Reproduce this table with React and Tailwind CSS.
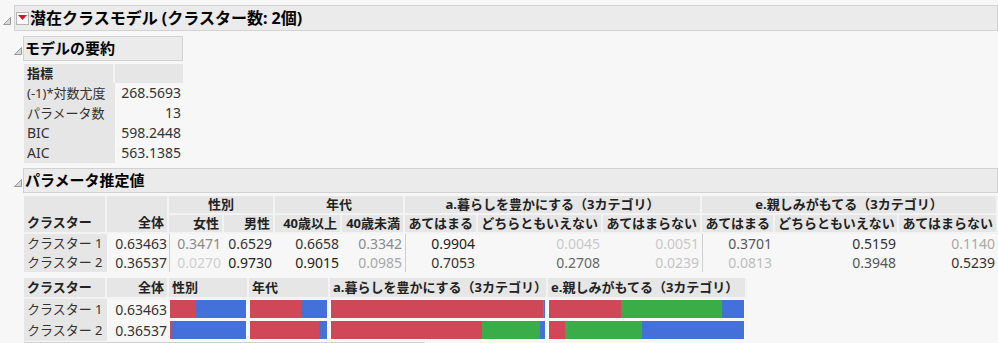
import React from "react";

const RED = "#d04858";
const GREEN = "#3aac48";
const BLUE = "#4470da";

const summary = [
  ["(-1)*対数尤度", "268.5693"],
  ["パラメータ数", "13"],
  ["BIC", "598.2448"],
  ["AIC", "563.1385"],
];

// value + text colour (JMP fades small probabilities)
const estimates = [
  {
    name: "クラスター 1",
    all: "0.63463",
    cells: [
      ["0.3471", "#8a8a8a"],
      ["0.6529", "#333"],
      ["0.6658", "#333"],
      ["0.3342", "#8a8a8a"],
      ["0.9904", "#222"],
      ["0.0045", "#c9c9c9"],
      ["0.0051", "#c9c9c9"],
      ["0.3701", "#555"],
      ["0.5159", "#333"],
      ["0.1140", "#a8a8a8"],
    ],
  },
  {
    name: "クラスター 2",
    all: "0.36537",
    cells: [
      ["0.0270", "#cfcfcf"],
      ["0.9730", "#222"],
      ["0.9015", "#222"],
      ["0.0985", "#a8a8a8"],
      ["0.7053", "#333"],
      ["0.2708", "#666"],
      ["0.0239", "#c4c4c4"],
      ["0.0813", "#bdbdbd"],
      ["0.3948", "#555"],
      ["0.5239", "#333"],
    ],
  },
];

const bars = [
  {
    name: "クラスター 1",
    all: "0.63463",
    groups: [
      [0.3471, 0, 0.6529],
      [0.6658, 0, 0.3342],
      [0.9904, 0.0045, 0.0051],
      [0.3701, 0.5159, 0.114],
    ],
  },
  {
    name: "クラスター 2",
    all: "0.36537",
    groups: [
      [0.027, 0, 0.973],
      [0.9015, 0, 0.0985],
      [0.7053, 0.2708, 0.0239],
      [0.0813, 0.3948, 0.5239],
    ],
  },
];

// columns that start a new group get a separator line in the data rows
const groupStart = [0, 4, 7];

function Disclose() {
  return (
    <svg width="8" height="8" viewBox="0 0 8 8" className="shrink-0">
      <polygon points="0.5,7.5 7.5,7.5 7.5,0.5" fill="#d8d8d8" stroke="#9a9a9a" strokeWidth="1" />
    </svg>
  );
}

function RedMenu() {
  return (
    <div className="w-[13px] h-[13px] border border-[#b5b5b5] bg-[#fafafa] flex items-center justify-center shrink-0">
      <svg width="9" height="6" viewBox="0 0 9 6">
        <polygon points="0,0 9,0 4.5,5" fill="#d5142a" />
      </svg>
    </div>
  );
}

function SectionHead({ title, className }) {
  return (
    <div className="flex items-center">
      <div className="w-[23px] flex justify-end pr-[1px] pt-[5px]">
        <Disclose />
      </div>
      <div
        className={
          "h-[25px] border border-[#d2d2d2] bg-[#ebebeb] flex items-center pl-[1px] text-[15px] font-bold text-black leading-none " +
          className
        }
      >
        {title}
      </div>
    </div>
  );
}

function Bar({ parts }) {
  const colors = [RED, GREEN, BLUE];
  return (
    <div className="flex h-full w-full border border-white/40">
      {parts.map((p, i) =>
        p > 0 ? <div key={i} style={{ width: `${p * 100}%`, backgroundColor: colors[i] }} /> : null
      )}
    </div>
  );
}

export default function App() {
  const hd = "bg-[#e6e6e6] border-r-2 border-b-2 border-[#f3f3f3] font-bold px-[3px] h-[19px] leading-[17px] whitespace-nowrap";

  return (
    <div
      className="w-[998px] h-[343px] overflow-hidden bg-[#f7f7f7] text-[13px] text-[#222]"
      style={{ fontFamily: '"Noto Sans", "Noto Sans CJK JP", sans-serif' }}
    >
      {/* report title */}
      <div className="flex items-center pt-[5px]">
        <div className="w-[14px] flex justify-center pt-[5px]">
          <Disclose />
        </div>
        <div className="flex-1 h-[26px] border border-[#d2d2d2] bg-[#ebebeb] flex items-center gap-[1px] pl-[1px]">
          <RedMenu />
          <span className="text-[16px] font-bold text-black leading-none">潜在クラスモデル (クラスター数: 2個)</span>
        </div>
      </div>

      {/* model summary */}
      <div className="mt-[5px]">
        <SectionHead title="モデルの要約" className="w-[160px]" />
        <div className="ml-[24px] mt-[3px] w-[159px]">
          <div className="flex h-[19px] leading-[19px] font-bold">
            <div className="w-[91px] bg-[#e6e6e6] border-r-2 border-[#f3f3f3] px-[3px]">指標</div>
            <div className="flex-1 bg-[#e6e6e6]" />
          </div>
          {summary.map(([k, v]) => (
            <div key={k} className="flex h-[20px] leading-[20px]">
              <div className="w-[91px] bg-[#e6e6e6] px-[3px] whitespace-nowrap text-[#333]">
                {k === "BIC" || k === "AIC" ? <span className="text-[14px]">{k}</span> : k}
              </div>
              <div className="flex-1 text-right pr-[2px] text-[14px] text-[#333]">{v}</div>
            </div>
          ))}
        </div>
      </div>

      {/* parameter estimates */}
      <div className="mt-[5px]">
        <SectionHead title="パラメータ推定値" className="flex-1" />

        <div className="ml-[24px] mt-[3px] grid grid-cols-[83px_62px_55px_51px_67px_63px_73px_125px_99px_73px_124px_99px]">
          <div className={hd + " row-span-2 h-[38px] flex items-end pb-[1px]"}>クラスター</div>
          <div className={hd + " row-span-2 h-[38px] flex items-end justify-end pb-[1px]"}>全体</div>
          <div className={hd + " col-span-2 text-center"}>性別</div>
          <div className={hd + " col-span-2 text-center"}>年代</div>
          <div className={hd + " col-span-3 text-center"}>a.暮らしを豊かにする（3カテゴリ）</div>
          <div className={hd + " col-span-3 text-center"}>e.親しみがもてる（3カテゴリ）</div>

          {["女性", "男性", "40歳以上", "40歳未満", "あてはまる", "どちらともいえない", "あてはまらない", "あてはまる", "どちらともいえない", "あてはまらない"].map((h, i) => (
            <div key={i} className={hd + " text-right"}>
              {h}
            </div>
          ))}

          {estimates.map((r) => (
            <React.Fragment key={r.name}>
              <div className="bg-[#e6e6e6] px-[3px] h-[19px] leading-[19px] text-[#333] whitespace-nowrap">{r.name}</div>
              <div className="text-right pr-[2px] h-[19px] leading-[19px] text-[14px] text-[#333]">{r.all}</div>
              {r.cells.map(([v, c], i) => (
                <div
                  key={i}
                  className={
                    "text-right pr-[3px] h-[19px] leading-[19px] text-[14px] " +
                    (groupStart.includes(i) ? "border-l border-[#cfcfcf]" : "")
                  }
                  style={{ color: c }}
                >
                  {v}
                </div>
              ))}
            </React.Fragment>
          ))}
        </div>

        {/* stacked bars */}
        <div className="ml-[24px] mt-[6px] grid grid-cols-[83px_62px_80px_81px_218px_199px] w-[723px]">
          <div className={hd + " h-[21px] leading-[19px]"}>クラスター</div>
          <div className={hd + " h-[21px] leading-[19px] text-right"}>全体</div>
          <div className={hd + " h-[21px] leading-[19px] px-[1px]"}>性別</div>
          <div className={hd + " h-[21px] leading-[19px] px-[1px]"}>年代</div>
          <div className={hd + " h-[21px] leading-[19px] px-[1px]"}>a.暮らしを豊かにする（3カテゴリ）</div>
          <div className={hd + " h-[21px] leading-[19px] px-[1px] border-r-0"}>e.親しみがもてる（3カテゴリ）</div>

          {bars.map((r) => (
            <React.Fragment key={r.name}>
              <div className="bg-[#e6e6e6] px-[3px] h-[21px] leading-[21px] text-[#333] whitespace-nowrap">{r.name}</div>
              <div className="text-right pr-[2px] h-[21px] leading-[21px] text-[14px] text-[#333]">{r.all}</div>
              {r.groups.map((g, i) => (
                <div key={i} className="h-[21px] pr-[2px] pb-[1px]">
                  <Bar parts={g} />
                </div>
              ))}
            </React.Fragment>
          ))}
        </div>

        <div className="ml-[24px] mt-[1px] w-[401px] h-[6px] border border-[#cfcfcf] bg-[#ececec]" />
      </div>
    </div>
  );
}
